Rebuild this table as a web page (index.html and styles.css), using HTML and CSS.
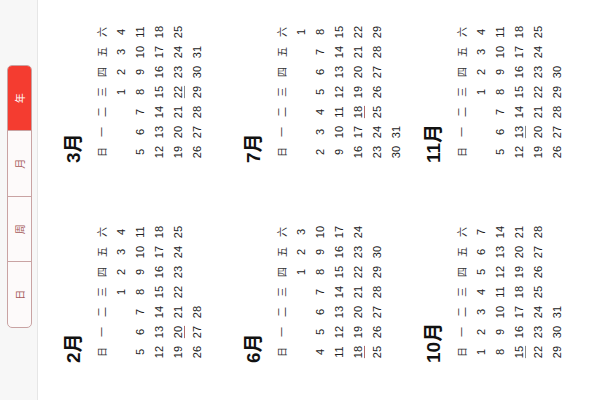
FILE: index.html
```html
<!DOCTYPE html>
<html lang="zh">
<head>
<meta charset="utf-8">
<link rel="stylesheet" href="styles.css">
</head>
<body>
<div class="viewport">
<div class="screen">
  <div class="header">
    <div class="seg">
      <span>日</span><span>周</span><span>月</span><span class="on">年</span>
    </div>
  </div>
  <div class="months">
    <div class="month">
      <div class="title">2月</div>
      <div class="grid">
        <span class="wd">日</span><span class="wd">一</span><span class="wd">二</span><span class="wd">三</span><span class="wd">四</span><span class="wd">五</span><span class="wd">六</span>
        <span class="c4">1</span><span>2</span><span>3</span><span>4</span>
        <span>5</span><span>6</span><span>7</span><span>8</span><span>9</span><span>10</span><span>11</span>
        <span>12</span><span>13</span><span>14</span><span>15</span><span>16</span><span>17</span><span>18</span>
        <span>19</span><span class="mk red">20</span><span>21</span><span>22</span><span>23</span><span>24</span><span>25</span>
        <span>26</span><span>27</span><span>28</span>
      </div>
    </div>
    <div class="month">
      <div class="title">3月</div>
      <div class="grid">
        <span class="wd">日</span><span class="wd">一</span><span class="wd">二</span><span class="wd">三</span><span class="wd">四</span><span class="wd">五</span><span class="wd">六</span>
        <span class="c4">1</span><span>2</span><span>3</span><span>4</span>
        <span>5</span><span>6</span><span>7</span><span>8</span><span>9</span><span>10</span><span>11</span>
        <span>12</span><span>13</span><span>14</span><span>15</span><span>16</span><span>17</span><span>18</span>
        <span>19</span><span>20</span><span>21</span><span class="mk gray">22</span><span>23</span><span>24</span><span>25</span>
        <span>26</span><span>27</span><span>28</span><span>29</span><span>30</span><span>31</span>
      </div>
    </div>
    <div class="month">
      <div class="title">6月</div>
      <div class="grid">
        <span class="wd">日</span><span class="wd">一</span><span class="wd">二</span><span class="wd">三</span><span class="wd">四</span><span class="wd">五</span><span class="wd">六</span>
        <span class="c5">1</span><span>2</span><span>3</span>
        <span>4</span><span>5</span><span>6</span><span>7</span><span>8</span><span>9</span><span>10</span>
        <span>11</span><span>12</span><span>13</span><span>14</span><span>15</span><span>16</span><span>17</span>
        <span class="mk red">18</span><span>19</span><span>20</span><span>21</span><span>22</span><span>23</span><span>24</span>
        <span>25</span><span>26</span><span>27</span><span>28</span><span>29</span><span>30</span>
      </div>
    </div>
    <div class="month">
      <div class="title">7月</div>
      <div class="grid">
        <span class="wd">日</span><span class="wd">一</span><span class="wd">二</span><span class="wd">三</span><span class="wd">四</span><span class="wd">五</span><span class="wd">六</span>
        <span class="c7">1</span>
        <span>2</span><span>3</span><span>4</span><span>5</span><span>6</span><span>7</span><span>8</span>
        <span>9</span><span>10</span><span>11</span><span>12</span><span>13</span><span>14</span><span>15</span>
        <span>16</span><span>17</span><span class="mk red">18</span><span>19</span><span>20</span><span>21</span><span>22</span>
        <span>23</span><span>24</span><span>25</span><span>26</span><span>27</span><span>28</span><span>29</span>
        <span>30</span><span>31</span>
      </div>
    </div>
    <div class="month">
      <div class="title">10月</div>
      <div class="grid">
        <span class="wd">日</span><span class="wd">一</span><span class="wd">二</span><span class="wd">三</span><span class="wd">四</span><span class="wd">五</span><span class="wd">六</span>
        <span>1</span><span>2</span><span>3</span><span>4</span><span>5</span><span>6</span><span>7</span>
        <span>8</span><span>9</span><span>10</span><span>11</span><span>12</span><span>13</span><span>14</span>
        <span class="mk gray">15</span><span>16</span><span>17</span><span>18</span><span>19</span><span>20</span><span>21</span>
        <span>22</span><span>23</span><span>24</span><span>25</span><span>26</span><span>27</span><span>28</span>
        <span>29</span><span>30</span><span>31</span>
      </div>
    </div>
    <div class="month">
      <div class="title">11月</div>
      <div class="grid">
        <span class="wd">日</span><span class="wd">一</span><span class="wd">二</span><span class="wd">三</span><span class="wd">四</span><span class="wd">五</span><span class="wd">六</span>
        <span class="c4">1</span><span>2</span><span>3</span><span>4</span>
        <span>5</span><span>6</span><span>7</span><span>8</span><span>9</span><span>10</span><span>11</span>
        <span>12</span><span class="mk gray">13</span><span>14</span><span>15</span><span>16</span><span>17</span><span>18</span>
        <span>19</span><span>20</span><span>21</span><span>22</span><span>23</span><span>24</span><span>25</span>
        <span>26</span><span>27</span><span>28</span><span>29</span><span>30</span>
      </div>
    </div>
  </div>
</div>
</div>
</body>
</html>
```
FILE: styles.css
```css
html, body {
  margin: 0;
  background: #fff;
}
.viewport {
  width: 600px;
  height: 400px;
  overflow: hidden;
}
.screen {
  width: 400px;
  height: 600px;
  transform-origin: 0 0;
  transform: translate(0, 400px) rotate(-90deg);
  font-family: "Liberation Sans", "Noto Sans CJK SC", sans-serif;
  background: #fff;
  overflow: hidden;
}
.header {
  height: 38px;
  box-sizing: border-box;
  background: #f7f7f7;
  border-bottom: 1px solid #e6e6e6;
  padding: 7px 0 0 72px;
}
.seg {
  display: flex;
  width: 263px;
  height: 25px;
  box-sizing: border-box;
  border: 1px solid #c9a3a3;
  border-radius: 5px;
  overflow: hidden;
  background: #fdfafa;
}
.seg span {
  flex: 1;
  display: flex;
  align-items: center;
  justify-content: center;
  font-size: 10px;
  color: #a65a5a;
  border-left: 1px solid #c9a3a3;
}
.seg span:first-child {
  border-left: 0;
}
.seg .on {
  background: #f43c30;
  color: #fff;
}
.months {
  display: grid;
  grid-template-columns: 200px 200px;
  grid-auto-rows: 180px;
  padding-top: 5px;
}
.month {
  padding: 20px 0 0 38px;
}
.title {
  font-size: 19px;
  font-weight: bold;
  line-height: 22px;
  margin: 0 0 8px -1px;
  color: #111;
}
.grid {
  display: grid;
  grid-template-columns: repeat(7, 20px);
  grid-auto-rows: 19px;
  font-size: 11px;
  line-height: 19px;
  text-align: center;
  color: #222;
}
.wd {
  font-size: 10px;
  color: #333;
}
.c4 { grid-column-start: 4; }
.c5 { grid-column-start: 5; }
.c7 { grid-column-start: 7; }
.mk {
  text-decoration: underline;
  text-underline-offset: 2px;
  text-decoration-thickness: 1px;
}
.mk.red { text-decoration-color: #b06a6a; }
.mk.gray { text-decoration-color: #8a8a8a; }
```
